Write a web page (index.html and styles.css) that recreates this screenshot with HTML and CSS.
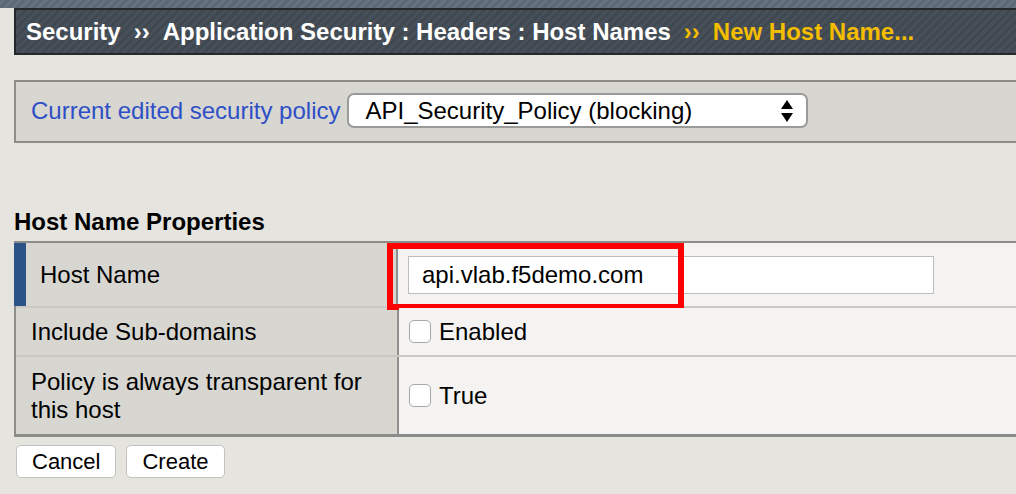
FILE: index.html
```html
<!DOCTYPE html>
<html>
<head>
<meta charset="utf-8">
<link rel="stylesheet" href="styles.css">
</head>
<body>
<div class="topstrip"></div>
<div class="crumbs">
  <span class="crumb">Security</span>
  <span class="sep">››</span>
  <span class="crumb">Application Security : Headers : Host Names</span>
  <span class="sep cur">››</span>
  <span class="crumb cur">New Host Name...</span>
</div>

<div class="policybar">
  <span class="policylabel">Current edited security policy</span>
  <div class="select">
    <span>API_Security_Policy (blocking)</span>
    <svg class="arrows" width="14" height="26" viewBox="0 0 14 26"><path d="M7 2 L13 11 L1 11 Z" fill="#000"/><path d="M1 15 L13 15 L7 24 Z" fill="#000"/></svg>
  </div>
</div>

<h2 class="section">Host Name Properties</h2>

<div class="props">
  <div class="row r1">
    <div class="label first">Host Name</div>
    <div class="value">
      <div class="textbox">api.vlab.f5demo.com</div>
      <div class="highlight"></div>
    </div>
  </div>
  <div class="row r2">
    <div class="label">Include Sub-domains</div>
    <div class="value"><span class="check"></span><span>Enabled</span></div>
  </div>
  <div class="row r3">
    <div class="label">Policy is always transparent for this host</div>
    <div class="value"><span class="check"></span><span>True</span></div>
  </div>
</div>

<div class="buttons">
  <button class="btn">Cancel</button>
  <button class="btn">Create</button>
</div>
</body>
</html>
```

FILE: styles.css
```css
html, body {
  margin: 0;
  padding: 0;
}
body {
  background: #e5e4df;
  font-family: "Liberation Sans", Arial, sans-serif;
  color: #000;
  width: 1016px;
  height: 494px;
  overflow: hidden;
}
.topstrip {
  height: 8px;
  background: repeating-linear-gradient(-45deg, #66727f 0 3px, #5c6875 3px 6px);
}
.crumbs {
  margin-left: 14px;
  height: 43px;
  border: 2px solid #25282b;
  border-right: none;
  background: repeating-linear-gradient(-45deg, #47505a 0 3px, #404850 3px 6px);
  display: flex;
  align-items: center;
  padding-left: 10px;
  font-weight: bold;
  font-size: 24px;
  color: #fff;
  white-space: nowrap;
}
.crumbs .sep {
  margin: 0 13px;
}
.crumbs .cur {
  color: #f5bd00;
}
.policybar {
  margin-top: 25px;
  margin-left: 14px;
  height: 59px;
  border-top: 2px solid #8c8c8a;
  border-left: 2px solid #8c8c8a;
  border-bottom: 2px solid #8c8c8a;
  background: #d7d6d1;
  display: flex;
  align-items: center;
  padding-left: 15px;
  padding-bottom: 2px;
  box-sizing: content-box;
}
.policybar {
  height: 57px;
}
.policylabel {
  color: #2f4fc6;
  font-size: 24px;
  margin-right: 7px;
}
.select {
  height: 31px;
  border: 2px solid #9a9a98;
  border-radius: 7px;
  background: #fff;
  display: flex;
  align-items: center;
  justify-content: space-between;
  padding: 0 12px 0 16px;
  box-sizing: content-box;
  width: 429px;
  font-size: 24px;
}
.arrows {
  display: block;
}
.section {
  margin: 67px 0 0 14px;
  font-size: 24px;
  font-weight: bold;
  height: 31px;
  line-height: 24px;
}
.props {
  margin-left: 14px;
  border-top: 2px solid #8c8c8a;
  border-bottom: 3px solid #8c8c8a;
  border-left: 2px solid #8c8c8a;
}
.row {
  display: flex;
  border-top: 2px solid #c9c8c3;
}
.row.r1 { border-top: none; height: 63px; }
.row.r2 { height: 47px; }
.row.r3 { height: 77px; }
.label {
  width: 366px;
  padding: 0 0 0 15px;
  background: #d7d6d1;
  border-right: 2px solid #8f8f8d;
  display: flex;
  align-items: center;
  font-size: 24px;
  line-height: 28px;
}
.label.first {
  border-left: 12px solid #2b5387;
  margin-left: -2px;
  padding-left: 14px;
  width: 356px;
}
.value {
  flex: 1;
  background: #f4f3f1;
  display: flex;
  align-items: center;
  padding-left: 10px;
  font-size: 24px;
  position: relative;
}
.textbox {
  width: 511px;
  height: 36px;
  border: 1px solid #bdbdbb;
  background: #fff;
  display: flex;
  align-items: center;
  padding-left: 13px;
}
.highlight {
  position: absolute;
  left: -11px;
  top: 0;
  width: 285px;
  height: 55px;
  border: 6px solid #ff0000;
}
.check {
  display: inline-block;
  width: 22px;
  height: 23px;
  border: 1px solid #a8a8a6;
  border-radius: 5px;
  background: #fff;
  margin-right: 8px;
  box-sizing: border-box;
}
.buttons {
  display: flex;
  gap: 10px;
  margin: 8px 0 0 16px;
}
.btn {
  font-family: "Liberation Sans", Arial, sans-serif;
  font-size: 22px;
  height: 33px;
  padding: 0 15px;
  background: #fff;
  border: 1px solid #c2c2c0;
  border-radius: 5px;
  color: #000;
}
```
